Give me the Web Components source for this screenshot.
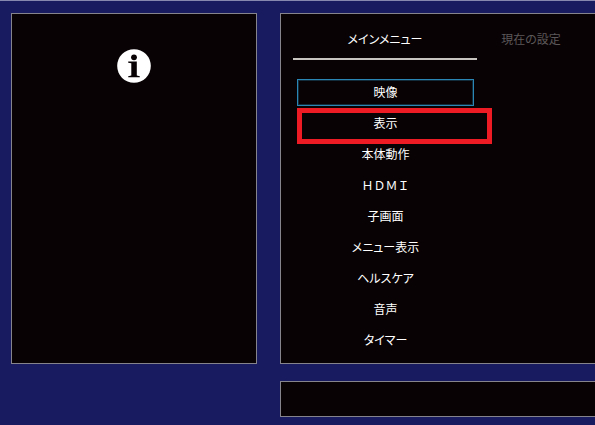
<!DOCTYPE html>
<html lang="ja">
<head>
<meta charset="utf-8">
<title>メインメニュー</title>
<style>
  body {
    margin: 0;
    min-height: 100vh;
    background: #191b61;
    color: #fff;
    font-family: "Noto Sans CJK JP", sans-serif;
    font-size: 12px;
    line-height: 18px;
    font-feature-settings: "palt";
    overflow: hidden;
  }
</style>
</head>
<body>
<osd-screen>
  <osd-panel slot="info"><info-icon></info-icon></osd-panel>
  <osd-panel slot="menu" open-end>
    <osd-tabs>
      <osd-tab active>メインメニュー</osd-tab>
      <osd-tab>現在の設定</osd-tab>
    </osd-tabs>
    <osd-menu>
      <osd-item selected>映像</osd-item>
      <osd-item marked>表示</osd-item>
      <osd-item>本体動作</osd-item>
      <osd-item full-width>ＨＤＭＩ</osd-item>
      <osd-item>子画面</osd-item>
      <osd-item>メニュー表示</osd-item>
      <osd-item>ヘルスケア</osd-item>
      <osd-item>音声</osd-item>
      <osd-item>タイマー</osd-item>
    </osd-menu>
  </osd-panel>
  <osd-panel slot="guide" open-end></osd-panel>
</osd-screen>

<script>
class OsdElement extends HTMLElement {
  constructor() {
    super();
    this.shadowDOM = this.attachShadow({mode: 'open'});
  }

  connectedCallback() {
    this.shadowDOM.innerHTML = this.render();
  }
}

class OsdScreen extends OsdElement {
  render() {
    return `
    <style>
    :host {
      display: grid;
      grid-template-columns: 246px minmax(0, 1fr);
      grid-template-rows: auto 36px;
      gap: 17px 23px;
      padding: 12px 0 8px 11px;
      border-top: 1px solid #8788b0;
    }
    slot[name="guide"]::slotted(*) {
      grid-column: 2;
    }
    </style>
    <slot name="info"></slot>
    <slot name="menu"></slot>
    <slot name="guide"></slot>
    `;
  }
}

class OsdPanel extends OsdElement {
  render() {
    return `
    <style>
    :host {
      display: block;
      box-sizing: border-box;
      border: 1px solid #85848c;
      background: #080204;
    }
    :host([open-end]) {
      border-right: 0;
    }
    </style>
    <slot></slot>
    `;
  }
}

class InfoIcon extends OsdElement {
  render() {
    return `
    <style>
    :host {
      display: flex;
      justify-content: center;
      padding-top: 35px;
    }
    svg {
      display: block;
      width: 34px;
      height: 34px;
    }
    </style>
    <svg viewBox="0 0 34 34" aria-hidden="true">
      <circle cx="17" cy="17" r="16.8" fill="#fff"/>
      <circle cx="17" cy="8.3" r="2.9" fill="#080204"/>
      <path d="M11.2 12.6H19.8V26.6L22.8 27.2V28.3H11.2V27.2L14.3 26.6V14.3L11.2 13.7Z" fill="#080204"/>
    </svg>
    `;
  }
}

class OsdTabs extends OsdElement {
  render() {
    return `
    <style>
    :host {
      display: flex;
      padding-left: 12px;
    }
    </style>
    <slot></slot>
    `;
  }
}

class OsdTab extends OsdElement {
  render() {
    return `
    <style>
    :host {
      display: block;
      flex: 0 0 108px;
    }
    :host([active]) {
      flex-basis: 184px;
    }
    button {
      display: block;
      box-sizing: border-box;
      width: 100%;
      padding: 16px 0 10px;
      border: 0;
      border-bottom: 2px solid transparent;
      background: none;
      color: #5c5859;
      font: inherit;
      font-feature-settings: inherit;
    }
    :host([active]) button {
      border-color: #c8c4bf;
      color: #fff;
    }
    </style>
    <button type="button"><slot></slot></button>
    `;
  }
}

class OsdMenu extends OsdElement {
  render() {
    return `
    <style>
    :host {
      display: block;
    }
    nav {
      display: flex;
      flex-direction: column;
      gap: 4px;
      width: 177px;
      padding: 19px 0 9px 16px;
    }
    </style>
    <nav><slot></slot></nav>
    `;
  }
}

class OsdItem extends OsdElement {
  render() {
    return `
    <style>
    :host {
      display: block;
      position: relative;
    }
    :host([full-width]) {
      font-feature-settings: normal;
    }
    button {
      display: block;
      box-sizing: border-box;
      width: 100%;
      height: 27px;
      padding: 0 0 2px;
      border: 1px solid transparent;
      background: none;
      color: inherit;
      font: inherit;
      font-feature-settings: inherit;
    }
    :host([selected]) button {
      border-color: #2a86b4;
      box-shadow: inset 0 0 0 1px #122c3b;
    }
    /* red frame laid over the row */
    :host([marked])::after {
      content: "";
      position: absolute;
      inset: -2px -18px -7px 0;
      border: 5px solid #ed1c24;
    }
    </style>
    <button type="button"><slot></slot></button>
    `;
  }
}

customElements.define("osd-screen", OsdScreen);
customElements.define("osd-panel", OsdPanel);
customElements.define("info-icon", InfoIcon);
customElements.define("osd-tabs", OsdTabs);
customElements.define("osd-tab", OsdTab);
customElements.define("osd-menu", OsdMenu);
customElements.define("osd-item", OsdItem);
</script>
</body>
</html>
